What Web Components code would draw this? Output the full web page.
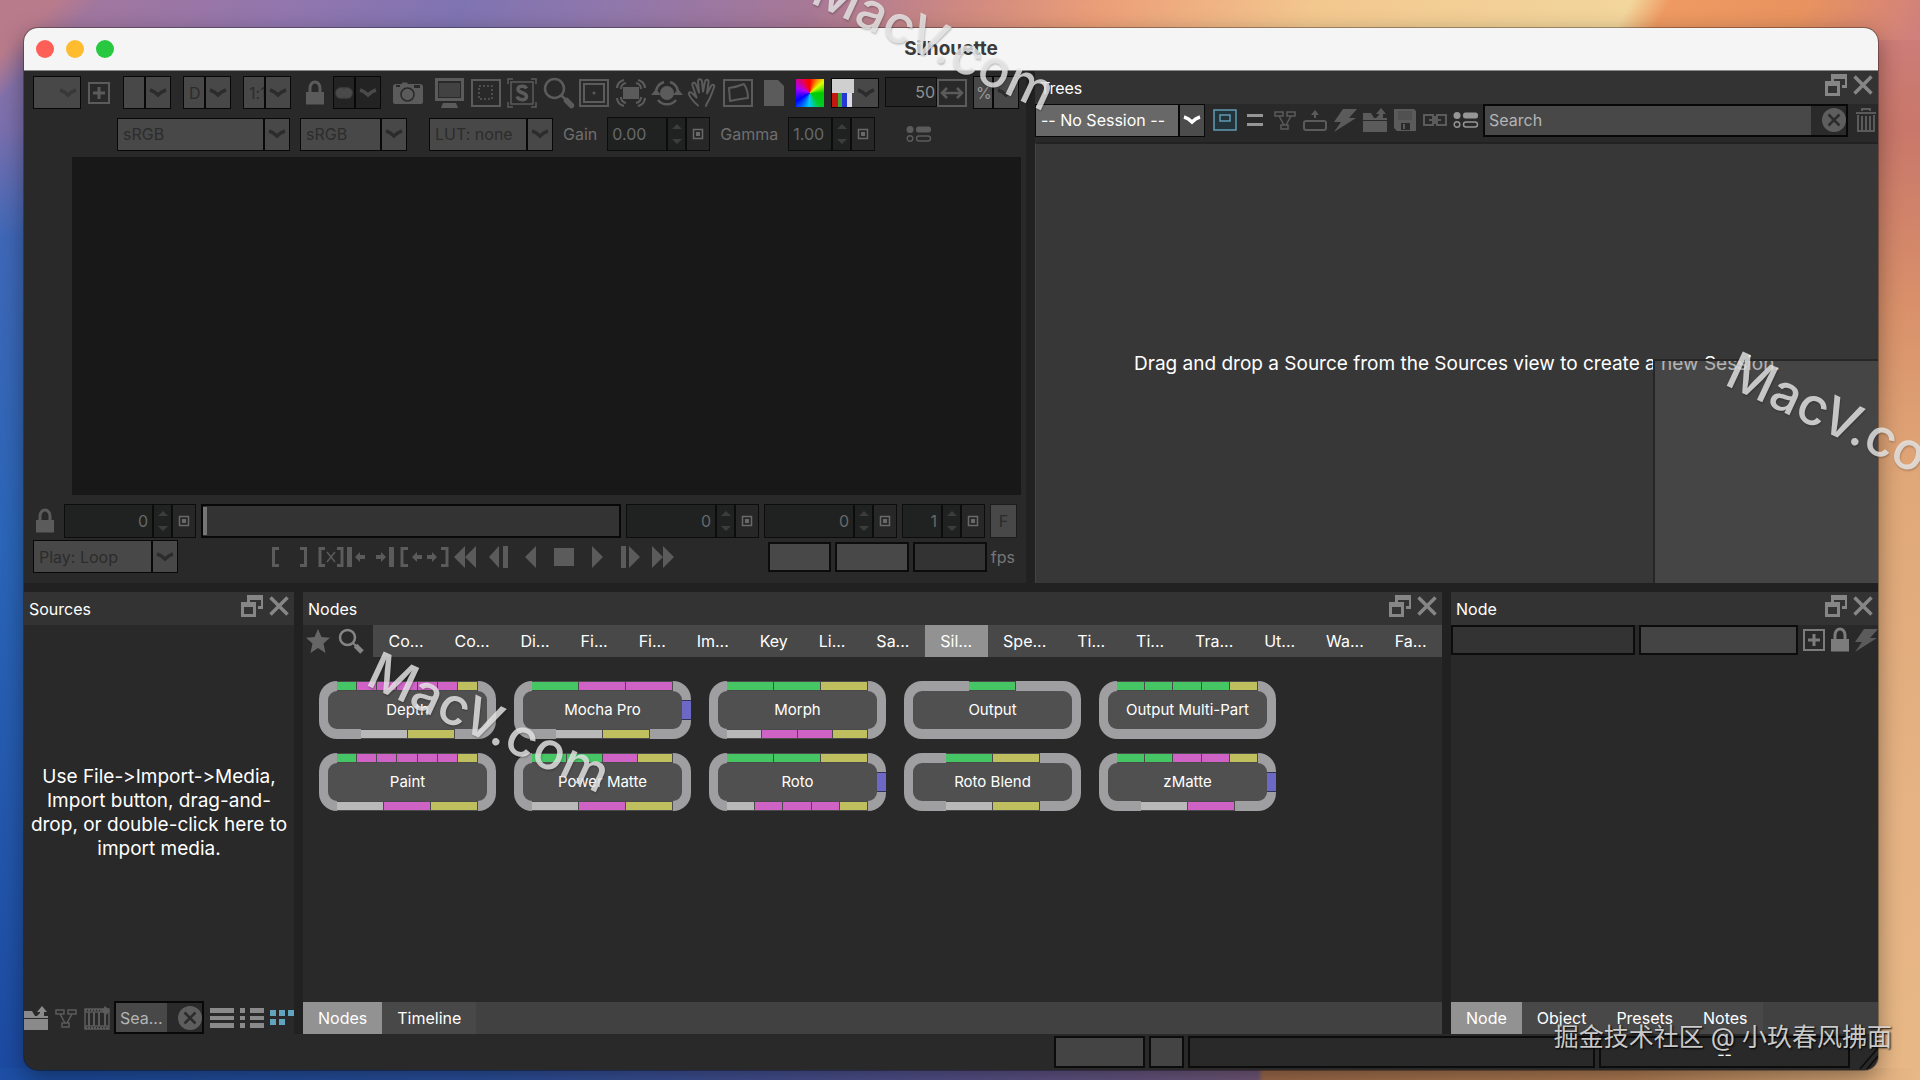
<!DOCTYPE html>
<html lang="en">
<head>
<meta charset="utf-8">
<title>Silhouette</title>
<style>
  html, body {
    height: 100%;
    margin: 0;
  }
  body {
    font: 16px/20px Inter, "Liberation Sans", sans-serif;
    font-variant-ligatures: no-contextual;
    color: #fff;
    overflow: hidden;
  }
</style>
</head>
<body>
<desk-top>
  <app-window heading="Silhouette">
    <viewer-pane slot="viewer"></viewer-pane>
    <trees-pane slot="trees"></trees-pane>
    <sources-pane slot="sources"></sources-pane>
    <nodes-pane slot="nodes"></nodes-pane>
    <node-pane slot="node"></node-pane>
    <status-bar slot="status"></status-bar>
  </app-window>
  <water-mark slot="marks" style="--x: 804px; --y: -47px">MacV.com</water-mark>
  <water-mark slot="marks" style="--x: 359px; --y: 635px">MacV.com</water-mark>
  <water-mark slot="marks" style="--x: 1718px; --y: 335px">MacV.com</water-mark>
  <credit-line slot="marks">掘金技术社区 @ 小玖春风拂面</credit-line>
</desk-top>

<script>
const base = `
  *, *::before, *::after { box-sizing: border-box; }
  button, input, select {
    font: inherit;
    color: inherit;
    margin: 0;
    padding: 0;
    border: 0;
    border-radius: 0;
    background: none;
    min-width: 0;
    outline: none;
    opacity: 1;
  }
  button { display: grid; place-items: center; }
`;

function define(name, html, setup) {
  const template = document.createElement('template');
  template.innerHTML = html;
  customElements.define(name, class extends HTMLElement {
    constructor() {
      super();
      this.attachShadow({mode: 'open'}).appendChild(template.content.cloneNode(true));
    }
    connectedCallback() {
      if (setup && !this.ready) setup(this, this.shadowRoot);
      this.ready = true;
    }
  });
}

// name: [viewBox width, viewBox height, markup]
const line = 'fill="none" stroke="currentColor"';
const icons = {
  plus: [24, 24, `<path ${line} stroke-width="2" d="M2 2h20v20H2z"/><path ${line} stroke-width="3" d="M12 6v12M6 12h12"/>`],
  lock: [20, 26, `<path ${line} stroke-width="3" d="M5 13V8a5 6 0 0 1 10 0v5"/><path d="M1 12h18v12.500H1z"/>`],
  camera: [32, 26, `<path d="M4 4h6v-1.500h5L16 4h12q3 0 3 3v15q0 2-2 2H3q-2 0-2-2V7q0-3 3-3z"/><circle cx="15.500" cy="14.500" r="6.500" fill="none" stroke="#292929" stroke-width="1.500"/><path fill="#292929" d="M22 5h6v3h-6zM4 5h4v2H4z"/>`],
  monitor: [30, 32, `<path fill-rule="evenodd" d="M0 1h29v23H0zM3 4v17h23V4z"/><path opacity=".5" d="M4 6h21v14H4z"/><path d="M8 26h13l2 5H6z"/>`],
  roi: [30, 28, `<path ${line} stroke-width="2" d="M1 1h28v26H1z"/><path ${line} stroke-width="1.500" stroke-dasharray="2 2" d="M8 7h13v13H8z"/>`],
  safe: [30, 30, `<path ${line} stroke-width="1.500" d="M1 6V1h5M24 1h5v5M29 24v5h-5M6 29H1v-5M4 4h22v22H4z"/><path ${line} stroke-width="3.500" d="M19.500 10.500C18 7 10.500 7.500 11 11.500c.5 4 8.500 2.500 8.500 7 0 4.500-8 4-9.500 0"/>`],
  zoom: [32, 32, `<circle cx="11.500" cy="11.500" r="9.500" ${line} stroke-width="2.500"/><path ${line} stroke-width="2.500" d="M18 18l4 4"/><path ${line} stroke-width="5.500" stroke-linecap="round" d="M23.500 23.500l5 5"/>`],
  find: [26, 26, `<circle cx="9.500" cy="9.500" r="7.500" ${line} stroke-width="2.500"/><path ${line} stroke-width="2" d="M15 15l3 3"/><path ${line} stroke-width="5" d="M17.500 17.500l6.500 6.500"/>`],
  frame: [30, 28, `<path ${line} stroke-width="2" d="M1 1h28v26H1zM5 5h20v18H5z"/><circle cx="15" cy="14" r="1.500"/>`],
  fit: [32, 30, `<path d="M8 9h16v12H8z"/><path ${line} stroke-width="2.200" d="M2 10a9 9 0 0 1 7-8M6 11a6 6 0 0 1 5-6M30 10a9 9 0 0 0-7-8M26 11a6 6 0 0 0-5-6M2 20a9 9 0 0 0 7 8M6 19a6 6 0 0 0 5 6M30 20a9 9 0 0 1-7 8M26 19a6 6 0 0 1-5 6"/>`],
  orbit: [32, 30, `<circle cx="16" cy="15" r="7"/><path ${line} stroke-width="2.500" d="M5 13A11.500 11.500 0 0 1 13 4M19 4a11.500 11.500 0 0 1 8 9M25 22a11.500 11.500 0 0 1-18 0"/><path d="M0 17l5-6 5 6zM22 17l5-6 5 6z"/>`],
  hand: [32, 30, `<path ${line} stroke-width="2" stroke-linejoin="round" stroke-linecap="round" d="M11 27.500C7 24 3 19 2 16.500c-1-2.500 2-3 3.500-1l4 4-4-12c-1-3 2.500-4 3.500-1l3 8-1-11c0-3 3.500-3 4 0l1 10 2-10c.5-3 4-2 3.500 1l-1.500 11 4-7.500c1.500-2.500 4-1 3 1.500-2 5-3.500 10-6 14-1 2-2 3-2 4.500"/>`],
  shape: [30, 28, `<path ${line} stroke-width="2" d="M1 1h28v26H1z"/><path ${line} stroke-width="2" stroke-linejoin="round" d="M6 9q8-1 15-4 4 6 4 14-9 1-18 3z"/>`],
  page: [22, 28, `<path d="M1 1h14l6 6v20H1z"/>`],
  width: [30, 28, `<path ${line} stroke-width="2" d="M1 1h28v26H1z"/><path ${line} stroke-width="2.500" d="M5 14h20M10 9l-5 5 5 5M20 9l5 5-5 5"/>`],
  options: [26, 18, `<circle cx="4" cy="4.500" r="3.500"/><rect x="10" y="1.500" width="15" height="6" rx="2.500"/><circle cx="4" cy="13.500" r="2.800" ${line} stroke-width="1.400"/><rect x="10.500" y="11" width="14" height="5" rx="2.500" ${line} stroke-width="1.400"/>`],
  key: [12, 12, `<path ${line} stroke-width="1.500" d="M1.500 1.500h9v9h-9z"/><path d="M4 4h4v4H4z"/>`],
  spin: [10, 22, `<path d="M0 6l5-5 5 5zM0 16l5 5 5-5z"/>`],
  chevron: [20, 12, `<path ${line} stroke-width="3.500" d="M2 3q4 1 8 5 4-4 8-5"/>`],
  toggle: [20, 14, `<rect x="1" y="1" width="18" height="12" rx="6" opacity=".6"/><circle cx="13" cy="7" r="5"/><circle cx="7" cy="7" r="5"/>`],
  restore: [22, 22, `<path fill-rule="evenodd" d="M6 0h16v14h-5v-3h3V5H9v2H6z"/><path fill-rule="evenodd" d="M0 7h15v15H0zM3 12v7h9v-7z"/>`],
  close: [20, 20, `<path ${line} stroke-width="3.500" d="M1.500 1.500l17 17M18.500 1.500l-17 17"/>`],
  view: [24, 22, `<path fill="#23333a" stroke="currentColor" stroke-width="1.500" d="M1 1h22v20H1z"/><path ${line} stroke-width="1.500" d="M7 6h10v6H7z"/>`],
  equals: [16, 14, `<path d="M0 1h16v3H0zM0 10h16v3H0z"/>`],
  graph: [22, 20, `<path ${line} stroke-width="1.500" d="M1 2h8v4H1zM13 2h8v4h-8zM7 15h7v4H7zM5 6l5 9M17 6l-5 9"/>`],
  tray: [24, 22, `<rect x="1" y="12" width="22" height="9" rx="2" ${line} stroke-width="2"/><path d="M12 1l4 5h-3v3h-2V6H8z"/>`],
  bolt: [24, 24, `<path d="M10 1h14l-8 9h7L1 24l7-10H1z"/>`],
  folder: [24, 24, `<path d="M0 5h8l3 5h2l3-3h3v3h5v2H0z"/><path d="M0 13h24v11H0z"/><path d="M18 0l5 6h-3v5h-4V6h-3z"/>`],
  save: [24, 24, `<path fill-rule="evenodd" d="M1 1h20l2 2v20H4l-3-3zM5 3v9h14V3zM8 15v7h9v-7z"/><path d="M10 16h2v5h-2z"/><path opacity=".8" d="M5 3h14v9H5z"/>`],
  link: [24, 14, `<path ${line} stroke-width="2" d="M10 2H1v10h9zM14 2h9v10h-9z"/><path ${line} stroke-width="2" d="M6 7h12M12 3v8"/>`],
  clear: [24, 24, `<circle cx="12" cy="12" r="12"/><path fill="none" stroke="#2c2c2c" stroke-width="2.500" d="M6.500 6.500l11 11M17.500 6.500l-11 11"/>`],
  trash: [20, 26, `<path d="M0 5h20v2H0z"/><path ${line} stroke-width="2" d="M6 4V2h8v2M2 8v16h16V8"/><path ${line} stroke-width="2" d="M6 9v14M10 9v14M14 9v14"/>`],
  star: [24, 24, `<path d="M12 0l3.500 8 8.500.8-6.500 5.700 2 9.500-7.500-5-7.500 5 2-9.500L0 8.800 8.500 8z"/>`],
  film: [26, 24, `<path ${line} stroke-width="1.500" d="M1 3h24v20H1zM1 6h24M1 20h24"/><path ${line} stroke-width="2" d="M5 6v14M10 6v14M15 6v14M21 8v12" /><path ${line} stroke-width="2" stroke-dasharray="2 1" d="M1 4h17M1 22h24"/><path d="M21 0l5 5-5 5-2-4-2-1 2-2z"/>`],
  rows: [24, 20, `<path d="M0 0h24v5H0zM0 8h24v4H0zM0 15h24v5H0z"/>`],
  list: [24, 20, `<path d="M0 0h5v5H0zM10 0h14v5H10zM0 8h5v4H0zM10 8h14v4H10zM0 15h5v5H0zM10 15h14v5H10z"/>`],
  tiles: [24, 20, `<path d="M0 2h6v6H0zM9 2h6v6H9zM18 2h6v6h-6zM0 11h6v6H0zM9 11h6v6H9z"/>`],
  markIn: [24, 22, `<path ${line} stroke-width="3" d="M15 2.500H9.500v17H15"/>`],
  markOut: [24, 22, `<path ${line} stroke-width="3" d="M9 2.500h5.500v17H9"/>`],
  markClear: [26, 22, `<path ${line} stroke-width="3" d="M7 2.500H2v17h5M19 2.500h5v17h-5"/><path ${line} stroke-width="1.500" d="M9 6l8 10M17 6L9 16"/>`],
  toIn: [24, 22, `<path d="M2 1h5v20H2zM10 11l5-5v3h5v4h-5v3z"/>`],
  toOut: [24, 22, `<path d="M17 1h5v20h-5zM14 11L9 6v3H4v4h5v3z"/>`],
  prevKey: [24, 22, `<path ${line} stroke-width="3" d="M9 2.500H3v17h6"/><path d="M13 11l5-5v3h5v4h-5v3z"/>`],
  nextKey: [24, 22, `<path ${line} stroke-width="3" d="M15 2.500h6v17h-6"/><path d="M11 11L6 6v3H1v4h5v3z"/>`],
  rewind: [24, 24, `<path d="M12 1v22L1 12zM23 1v22L12 12z"/>`],
  stepBack: [24, 24, `<path d="M13 1v22L3 12zM17 1h5v22h-5z"/>`],
  playBack: [24, 24, `<path d="M17 1v22L6 12z"/>`],
  stop: [24, 24, `<path d="M2 3h20v18H2z"/>`],
  play: [24, 24, `<path d="M7 1v22l11-11z"/>`],
  stepOn: [24, 24, `<path d="M11 1v22l11-11zM3 1h5v22H3z"/>`],
  forward: [24, 24, `<path d="M1 1v22l11-11zM12 1v22l11-11z"/>`],
  swatch: [22, 28, `<path fill="#cfcfcf" d="M0 0h22v14H0z"/><path fill="#c4180f" d="M0 14h6v14H0z"/><path fill="#3da73a" d="M6 14h4v14H6z"/><path fill="#2438d8" d="M10 14h5v14h-5z"/><path fill="#dcdce8" d="M15 14h5v14h-5z"/>`],
  grip: [28, 32, `<path ${line} stroke-width="1.500" d="M10 31L28 10M17 31L28 18M23 31l5-6"/>`],
};

define('x-icon', `
  <style>
    :host { display: inline-grid; place-items: center; flex: none; }
    svg { display: block; fill: currentColor; }
  </style>
`, (host, root) => {
  const [w, h, markup] = icons[host.getAttribute('name')];
  root.innerHTML += `<svg width="${w}" height="${h}" viewBox="0 0 ${w} ${h}" aria-hidden="true">${markup}</svg>`;
});

define('tool-button', `
  <style>${base}
    :host { display: block; flex: none; width: 30px; height: 32px; color: #5b5b5b; }
    button { width: 100%; height: 100%; }
  </style>
  <button type="button"></button>
`, (host, root) => {
  const button = root.querySelector('button');
  const name = host.getAttribute('name');
  button.setAttribute('aria-label', name);
  button.innerHTML = `<x-icon name="${name}"></x-icon>`;
});

define('drop-down', `
  <style>${base}
    :host { display: grid; grid-template-columns: 1fr 26px; flex: none; height: 33px; border: 1px solid #080808; background: #484848; color: #2c2c2c; }
    select { grid-area: 1 / 1 / 2 / 3; appearance: none; padding: 0 26px 0 5px; width: 100%; }
    x-icon, slot { pointer-events: none; }
    x-icon { grid-area: 1 / 2; border-left: 2px solid #080808; }
    slot { grid-area: 1 / 1; display: grid; place-items: center; }
    :host([plain]) x-icon { border-left-color: transparent; color: #383838; }
    :host([dark]) { background: #232323; color: #4a4a4a; }
    :host([strong]) { background: #686868; color: #fff; }
    :host([strong]) x-icon { background: #4c4c4c; }
    :host([lit]) select { padding-left: 2px; color: #999; }
  </style>
  <select><option></option></select>
  <slot></slot>
  <x-icon name="chevron"></x-icon>
`, (host, root) => {
  root.querySelector('select').setAttribute('aria-label', host.getAttribute('label'));
  root.querySelector('option').textContent = host.getAttribute('value') || '';
});

define('spin-field', `
  <style>${base}
    :host { display: flex; align-items: center; gap: 10px; flex: none; color: #6f6f6f; }
    label:empty { display: none; }
    div { display: grid; grid-template-columns: 1fr 19px 24px; height: 34px; width: var(--w); border: 1px solid #0c0c0c; background: #202222; }
    input { padding: 0 4px; width: 100%; color: #66696b; text-align: right; }
    :host([label]) input { text-align: left; }
    button { border-left: 2px solid #0c0c0c; color: #3c3c3c; }
    button:last-child { background: #272727; color: #696969; }
  </style>
  <label for="value"></label>
  <div>
    <input id="value" type="text">
    <button type="button" aria-label="Step"><x-icon name="spin"></x-icon></button>
    <button type="button" aria-label="Keyframe"><x-icon name="key"></x-icon></button>
  </div>
`, (host, root) => {
  const input = root.querySelector('input');
  root.querySelector('label').textContent = host.getAttribute('label') || '';
  if (!host.hasAttribute('label')) input.setAttribute('aria-label', host.getAttribute('hint'));
  input.value = host.getAttribute('value');
});

define('search-field', `
  <style>${base}
    :host { display: grid; grid-template-columns: 1fr 35px; height: 33px; border: 2px solid #080808; background: #2a2a2a; color: #b4b4b4; min-width: 0; }
    input { width: 100%; padding: 0 4px; background: #484848; }
    input::placeholder { color: inherit; opacity: 1; }
    button { place-items: center end; color: #5e5e5e; }
  </style>
  <input type="text" aria-label="Search">
  <button type="button" aria-label="Clear"><x-icon name="clear"></x-icon></button>
`, (host, root) => {
  root.querySelector('input').placeholder = host.getAttribute('hint');
});

define('pane-header', `
  <style>${base}
    :host { display: flex; align-items: center; gap: 6px; flex: none; height: 33px; padding: 0 5px; background: #333; }
    span { flex: 1; }
    button { color: #868686; height: 27px; align-self: flex-start; }
  </style>
  <span><slot></slot></span>
  <button type="button" aria-label="Restore"><x-icon name="restore"></x-icon></button>
  <button type="button" aria-label="Close"><x-icon name="close"></x-icon></button>
`);

define('tab-strip', `
  <style>${base}
    :host { display: flex; flex: none; height: 32px; background: #414141; }
    button { padding: 0 15px; background: #484848; }
    button[aria-selected=true] { background: #929292; }
    :host([fill]) button { flex: 1 1 auto; padding: 0 8px; }
  </style>
`, (host, root) => {
  host.getAttribute('tabs').split(',').forEach((text, i) => {
    const button = document.createElement('button');
    button.type = 'button';
    button.setAttribute('role', 'tab');
    button.setAttribute('aria-selected', i === Number(host.getAttribute('selected') || 0));
    button.textContent = text;
    root.appendChild(button);
  });
});

define('node-card', `
  <style>${base}
    :host { display: block; }
    .card { position: relative; display: grid; grid-template-rows: 10px 1fr 10px; width: 177px; height: 58px; padding: 0; border-radius: 18px; background: #9f9fa1; overflow: hidden; }
    .card > * { width: 100%; height: 100%; }
    .body { display: grid; place-items: center; width: 159px; border-radius: 9px; background: #505050; }
    .ports { display: flex; justify-content: center; padding: 0 18px; }
    .ports i { flex: 1; max-width: 47px; border: 1px solid #4a4a4a; border-width: 1px 1px 1px 0; }
    .g { background: #45c563; }
    .p { background: #cf63c5; }
    .y { background: #c0bf60; }
    .w { background: #b9b9b9; }
    .side { display: none; }
    :host([side]) .side { display: block; position: absolute; right: 0; top: 19px; width: 9px; height: 20px; background: #6b69c5; border: 1px solid #33335a; border-width: 1px 0; }
  </style>
  <button class="card" type="button">
    <span class="ports top"></span>
    <span class="body"><slot></slot></span>
    <span class="ports bottom"></span>
    <span class="side"></span>
  </button>
`, (host, root) => {
  for (const edge of ['top', 'bottom'])
    root.querySelector('.' + edge).innerHTML = [...(host.getAttribute(edge) || '')].map(c => `<i class="${c}"></i>`).join('');
});

define('viewer-pane', `
  <style>${base}
    :host { display: flex; flex-direction: column; background: #292929; min-width: 0; padding: 5px 5px 10px 9px; }
    .row, .group { display: flex; align-items: center; flex: none; }
    .row { gap: 12px; }
    .group { gap: 6px; }
    .display { gap: 10px; margin-top: 8px; padding-left: 84px; }
    .canvas { flex: 1; background: #181818; margin: 6px 0 9px 39px; }
    .short { width: 48px; }
    .small { width: 24px; }
    .camera { width: 42px; }
    .wheel { width: 28px; height: 28px; margin: 0 1px; background: conic-gradient(#f00, #f70 25deg, #df0 50deg, #0c0 90deg, #0c2 140deg, #0cf 185deg, #00f 240deg, #a0f 290deg, #f00 350deg); }
    .swatch { display: grid; grid-template-columns: 22px 1fr; width: 48px; height: 30px; border: 1px solid #080808; background: #484848; color: #2c2c2c; }
    .zoom { display: flex; }
    .zoom input { width: 52px; height: 30px; padding: 0 1px; text-align: right; border: 1px solid #0c0c0c; background: #242424; color: #909090; }
    .unit { width: 46px; }
    .lut { margin-left: 12px; }
    .more { margin-left: 19px; }
    .frames { gap: 5px; padding-right: 4px; }
    .frames tool-button { margin: 0 2px 0 0; }
    input[type=range] { appearance: none; flex: 1; height: 34px; border: 2px solid #080808; background: #333; }
    input[type=range]::-webkit-slider-thumb { appearance: none; width: 4px; height: 28px; background: #757575; }
    .full { width: 27px; height: 34px; border: 1px solid #1c1c1c; background: #484848; color: #2a2a2a; }
    .transport { margin-top: 2px; gap: 4px; padding-right: 6px; }
    .play { width: 145px; }
    .marks { display: flex; gap: 3px; margin: 0 auto 0 82px; }
    .marks tool-button { width: 24px; }
    .marks .move { margin-left: 6px; }
    .box { height: 30px; width: 74px; border: 2px solid #0c0c0c; background: #484848; }
    .box.first { width: 63px; }
    .box.rate { background: #333; }
    .transport label { color: #777; }
  </style>
  <div class="row">
    <div class="group">
      <drop-down class="short" plain label="Session"></drop-down>
      <tool-button class="small" name="plus"></tool-button>
    </div>
    <drop-down class="short" label="View"></drop-down>
    <drop-down class="short" label="Depth" value="D"></drop-down>
    <drop-down class="short" label="Proxy" value="1:1"></drop-down>
    <div class="group">
      <tool-button class="small" name="lock"></tool-button>
      <drop-down class="short" dark label="Overlay"><x-icon name="toggle"></x-icon></drop-down>
      <tool-button class="camera" name="camera"></tool-button>
      <tool-button name="monitor"></tool-button>
      <tool-button name="roi"></tool-button>
      <tool-button name="safe"></tool-button>
      <tool-button name="zoom"></tool-button>
      <tool-button name="frame"></tool-button>
      <tool-button name="fit"></tool-button>
      <tool-button name="orbit"></tool-button>
      <tool-button name="hand"></tool-button>
      <tool-button name="shape"></tool-button>
      <tool-button name="page"></tool-button>
      <button class="wheel" type="button" aria-label="Colour"></button>
      <button class="swatch" type="button" aria-label="Channels"><x-icon name="swatch"></x-icon><x-icon name="chevron"></x-icon></button>
      <div class="zoom">
        <input type="text" value="50" aria-label="Zoom">
        <tool-button name="width"></tool-button>
      </div>
      <drop-down class="unit" lit label="Unit" value="%"></drop-down>
    </div>
  </div>
  <div class="row display">
    <drop-down style="width: 173px" label="Input profile" value="sRGB"></drop-down>
    <drop-down style="width: 107px" label="Display profile" value="sRGB"></drop-down>
    <drop-down class="lut" style="width: 124px" label="LUT" value="LUT: none"></drop-down>
    <spin-field style="--w: 103px" label="Gain" value="0.00"></spin-field>
    <spin-field style="--w: 87px" label="Gamma" value="1.00"></spin-field>
    <tool-button class="more" name="options"></tool-button>
  </div>
  <div class="canvas"></div>
  <div class="row frames">
    <tool-button class="small" name="lock"></tool-button>
    <spin-field style="--w: 132px" hint="Start" value="0"></spin-field>
    <input type="range" min="0" max="100" value="0" aria-label="Frame">
    <spin-field style="--w: 133px" hint="Current" value="0"></spin-field>
    <spin-field style="--w: 133px" hint="End" value="0"></spin-field>
    <spin-field style="--w: 83px" hint="Step" value="1"></spin-field>
    <button class="full" type="button">F</button>
  </div>
  <div class="row transport">
    <drop-down class="play" label="Play mode" value="Play: Loop"></drop-down>
    <div class="marks">
      <tool-button name="markIn"></tool-button>
      <tool-button name="markOut"></tool-button>
      <tool-button name="markClear"></tool-button>
      <tool-button name="toIn"></tool-button>
      <tool-button name="toOut"></tool-button>
      <tool-button name="prevKey"></tool-button>
      <tool-button name="nextKey"></tool-button>
      <tool-button name="rewind"></tool-button>
      <tool-button class="move" name="stepBack"></tool-button>
      <tool-button class="move" name="playBack"></tool-button>
      <tool-button class="move" name="stop"></tool-button>
      <tool-button class="move" name="play"></tool-button>
      <tool-button class="move" name="stepOn"></tool-button>
      <tool-button class="move" name="forward"></tool-button>
    </div>
    <input class="box first" type="text" aria-label="In">
    <input class="box" type="text" aria-label="Out">
    <input class="box rate" id="rate" type="text">
    <label for="rate">fps</label>
  </div>
`);

define('trees-pane', `
  <style>${base}
    :host { display: flex; flex-direction: column; background: #292929; min-width: 0; }
    .tools { display: flex; align-items: center; flex: none; height: 38px; padding-bottom: 6px; gap: 6px; }
    drop-down { width: 170px; margin-right: 2px; }
    tool-button { width: 24px; }
    .on { color: #5f9bb5; }
    .lit { color: #969696; }
    search-field { flex: 1; }
    .canvas { position: relative; flex: 1; display: grid; justify-items: center; align-content: center; background: #373737; border-top: 2px solid #222; border-left: 1px solid #444; }
    p { margin: 0; font-size: 19px; line-height: 24px; }
    .overview { position: absolute; right: 0; bottom: 0; width: 225px; height: 51%; background: rgba(86, 86, 86, .45); border: 2px solid #262626; border-width: 2px 0 0 2px; }
  </style>
  <pane-header>Trees</pane-header>
  <div class="tools">
    <drop-down strong label="Session" value="-- No Session --"></drop-down>
    <tool-button class="on" name="view"></tool-button>
    <tool-button class="lit" name="equals"></tool-button>
    <tool-button name="graph"></tool-button>
    <tool-button name="tray"></tool-button>
    <tool-button name="bolt"></tool-button>
    <tool-button name="folder"></tool-button>
    <tool-button name="save"></tool-button>
    <tool-button name="link"></tool-button>
    <tool-button class="lit" name="options"></tool-button>
    <search-field hint="Search"></search-field>
    <tool-button name="trash"></tool-button>
  </div>
  <div class="canvas">
    <p>Drag and drop a Source from the Sources view to create a new Session.</p>
    <div class="overview"></div>
  </div>
`);

define('sources-pane', `
  <style>${base}
    :host { display: flex; flex-direction: column; background: #292929; min-width: 0; }
    p { flex: 1; display: grid; place-content: center; margin: 0; font-size: 19px; line-height: 24px; text-align: center; }
    .tools { display: flex; align-items: center; flex: none; height: 33px; gap: 6px; }
    tool-button { width: 24px; }
    search-field { width: 90px; }
    .lit { color: #8a8a8a; }
    .on { color: #62a3bd; }
  </style>
  <pane-header>Sources</pane-header>
  <p>Use File-&gt;Import-&gt;Media, Import button, drag-and-drop, or double-click here to import media.</p>
  <div class="tools">
    <tool-button class="lit" name="folder"></tool-button>
    <tool-button name="graph"></tool-button>
    <tool-button name="film"></tool-button>
    <search-field hint="Sea..."></search-field>
    <tool-button class="lit" name="rows"></tool-button>
    <tool-button class="lit" name="list"></tool-button>
    <tool-button class="on" name="tiles"></tool-button>
  </div>
`);

define('nodes-pane', `
  <style>${base}
    :host { display: flex; flex-direction: column; background: #292929; min-width: 0; }
    .kinds { display: flex; flex: none; align-items: center; }
    .kinds tool-button { color: #666; }
    .kinds tool-button + tool-button { margin-left: 3px; color: #858585; }
    .kinds tab-strip { flex: 1; margin-left: 7px; }
    .cards { flex: 1; display: grid; grid-template-columns: repeat(auto-fill, 177px); align-content: start; gap: 14px 18px; padding: 24px 16px; font-size: 15px; }
  </style>
  <pane-header>Nodes</pane-header>
  <div class="kinds">
    <tool-button name="star"></tool-button>
    <tool-button name="find"></tool-button>
    <tab-strip fill selected="9" tabs="Co...,Co...,Di...,Fi...,Fi...,Im...,Key,Li...,Sa...,Sil...,Spe...,Ti...,Ti...,Tra...,Ut...,Wa...,Fa..."></tab-strip>
  </div>
  <div class="cards">
    <node-card top="gpppppy" bottom="wy">Depth</node-card>
    <node-card top="gpp" bottom="wy" side>Mocha Pro</node-card>
    <node-card top="ggy" bottom="wppy">Morph</node-card>
    <node-card top="g">Output</node-card>
    <node-card top="ggggy">Output Multi-Part</node-card>
    <node-card top="gpppppy" bottom="wpy">Paint</node-card>
    <node-card top="ggpy" bottom="wpy">Power Matte</node-card>
    <node-card top="ggy" bottom="wpppy" side>Roto</node-card>
    <node-card top="gy" bottom="wy">Roto Blend</node-card>
    <node-card top="ggppy" bottom="wp" side>zMatte</node-card>
  </div>
  <tab-strip tabs="Nodes,Timeline"></tab-strip>
`);

define('node-pane', `
  <style>${base}
    :host { display: flex; flex-direction: column; background: #292929; min-width: 0; }
    .tools { display: flex; flex: 1; align-items: flex-start; gap: 2px; color: #7c7c7c; }
    input { height: 30px; border: 2px solid #0c0c0c; background: #333; flex: 184 1 0; margin-right: 2px; }
    input + input { background: #444; flex-grow: 158; }
    tool-button { width: 24px; height: 30px; color: inherit; }
    tool-button:last-child { color: #5b5b5b; }
  </style>
  <pane-header>Node</pane-header>
  <div class="tools">
    <input type="text" aria-label="Name">
    <input type="text" aria-label="Label">
    <tool-button name="plus"></tool-button>
    <tool-button name="lock"></tool-button>
    <tool-button name="bolt"></tool-button>
  </div>
  <tab-strip tabs="Node,Object,Presets,Notes"></tab-strip>
`);

define('status-bar', `
  <style>${base}
    :host { display: flex; justify-content: flex-end; gap: 4px; height: 34px; padding-top: 2px; background: #292929; color: #0c0c0c; }
    div { border: 2px solid #0c0c0c; height: 32px; }
    .fill { background: #444; width: 91px; }
    .mini { background: #444; width: 35px; }
    .log { width: 407px; }
    .info { width: 251px; color: #fff; text-align: center; line-height: 32px; }
    x-icon { align-self: end; margin-left: -4px; }
  </style>
  <div class="fill"></div>
  <div class="mini"></div>
  <div class="log"></div>
  <div class="info">--</div>
  <x-icon name="grip"></x-icon>
`);

define('app-window', `
  <style>${base}
    :host { display: flex; flex-direction: column; overflow: hidden; border-radius: 14px; background: #212121; box-shadow: 0 0 0 1px rgba(0, 0, 0, .3), 0 8px 24px rgba(0, 0, 0, .4); }
    header { display: grid; grid-template-columns: 1fr auto 1fr; align-items: center; flex: none; height: 43px; padding: 0 12px; background: #f5f5f5; color: #3a3a3a; font-size: 19px; font-weight: 700; border-bottom: 1px solid #8a8a8a; }
    .lights { display: flex; gap: 12px; }
    .lights button { width: 18px; height: 18px; border-radius: 50%; }
    h1 { margin: 0; font: inherit; }
    .top { display: grid; grid-template-columns: 1002fr 843fr; gap: 9px; flex: 512 1 0; min-height: 0; }
    .bottom { display: grid; grid-template-columns: 270px 1fr 427px; gap: 9px; flex: 442 1 0; min-height: 0; margin-top: 9px; }
  </style>
  <header>
    <div class="lights">
      <button type="button" aria-label="Close" style="background: #ff5f57"></button>
      <button type="button" aria-label="Minimize" style="background: #febc2e"></button>
      <button type="button" aria-label="Zoom" style="background: #28c840"></button>
    </div>
    <h1></h1>
  </header>
  <div class="top"><slot name="viewer"></slot><slot name="trees"></slot></div>
  <div class="bottom"><slot name="sources"></slot><slot name="nodes"></slot><slot name="node"></slot></div>
  <slot name="status"></slot>
`, (host, root) => {
  root.querySelector('h1').textContent = host.getAttribute('heading');
});

define('water-mark', `
  <style>
    :host { position: absolute; left: var(--x); top: var(--y); transform: rotate(25deg); transform-origin: 0 100%; font: 500 52px/60px Inter, sans-serif; color: rgba(235, 235, 235, .8); text-shadow: 1px 1px 2px rgba(0, 0, 0, .25); pointer-events: none; }
  </style>
  <slot></slot>
`);

define('credit-line', `
  <style>
    :host { position: absolute; right: 28px; bottom: 25px; font: 25px/36px Inter, "Noto Sans CJK SC", sans-serif; color: rgba(235, 235, 235, .85); text-shadow: 1px 1px 2px #000; pointer-events: none; }
  </style>
  <slot></slot>
`);

define('desk-top', `
  <style>
    :host { position: relative; display: flex; height: 100vh; padding: 28px 42px 10px 24px; box-sizing: border-box; overflow: hidden;
      background:
        linear-gradient(to right, #1c4fa5, #2c53a3 25%, #5a5590 50%, #775d80 65.500%, #a6714e 65.800%, #b98358 85%, #e8b886) bottom / 100% 12px no-repeat,
        linear-gradient(135deg, #b87b8c 0 40px, transparent 70px),
        linear-gradient(120deg, #a87797, #9276ae 15%, #7f74b2 24%, #9177ab 32%, #a87896 42%, #d08a80 50%, #ec9f78 57%, #f3c88f 68%, #f2d69c 84%, #ee9a62 86%, #e8935f 93%, #cf7f7e) top / 100% 40px no-repeat,
        linear-gradient(to bottom, #9878a6, #7a6fae 12%, #3f68b8 22%, #2b66b9 50%, #1c4aa2) left / 60px 100% no-repeat,
        linear-gradient(to bottom, #cf7f7e, #c9776a 12%, #d9906a 28%, #e0a878 45%, #e6b384 75%, #e8b886) right / 60px 100% no-repeat; }
    ::slotted(app-window) { flex: 1; min-width: 0; }
  </style>
  <slot></slot>
  <slot name="marks"></slot>
`);
</script>
</body>
</html>
